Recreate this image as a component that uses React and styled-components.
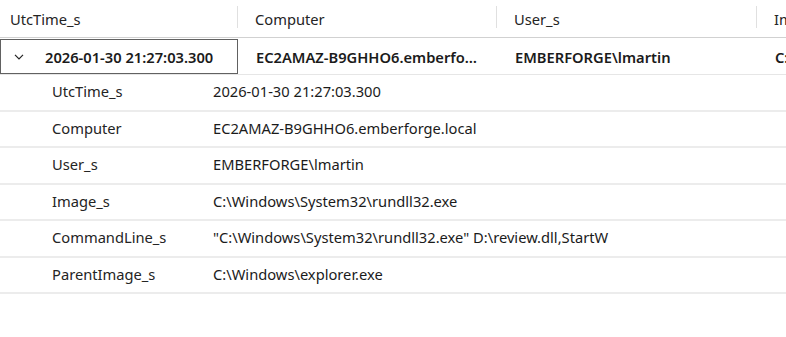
import React from 'react';
import styled, { createGlobalStyle } from 'styled-components';

const GlobalStyle = createGlobalStyle`
  html, body {
    margin: 0;
    padding: 0;
    background: #ffffff;
  }
  body {
    font-family: "Segoe UI", "Noto Sans", "Open Sans", sans-serif;
    color: #1b1b1b;
  }
`;

const columns = [
  { key: 'UtcTime_s', width: 238 },
  { key: 'Computer', width: 259 },
  { key: 'User_s', width: 260 },
  { key: 'Image_s', width: 260 },
];

const Grid = styled.div`
  width: 786px;
  height: 337px;
  overflow: hidden;
  font-size: 14.7px;
`;

const HeaderRow = styled.div`
  display: flex;
  height: 38px;
  border-bottom: 1px solid #d1d1d1;
  box-sizing: border-box;
`;

const HeaderCell = styled.div`
  flex: 0 0 ${(p) => p.$width}px;
  display: flex;
  align-items: center;
  padding-left: ${(p) => (p.$first ? 10 : 17)}px;
  box-sizing: border-box;
  position: relative;
  color: #242424;
  white-space: nowrap;

  &::after {
    content: '';
    position: absolute;
    right: 0;
    top: 6px;
    height: 22px;
    border-right: 1px solid #e0e0e0;
  }
`;

const DataRow = styled.div`
  display: flex;
  height: 36px;
  border-bottom: 1px solid #e6e6e6;
  box-sizing: content-box;
  font-weight: 600;
`;

const DataCell = styled.div`
  flex: 0 0 ${(p) => p.$width}px;
  display: flex;
  align-items: center;
  gap: 21px;
  padding: 0 15px 0 ${(p) => (p.$selected ? 10 : 17)}px;
  box-sizing: border-box;
  white-space: nowrap;
  overflow: hidden;
  border: ${(p) => (p.$selected ? '1px solid #616161' : '1px solid transparent')};
  margin-top: 1px;
`;

const CellText = styled.span`
  overflow: hidden;
  text-overflow: ellipsis;
`;

const Chevron = styled.svg`
  flex: 0 0 auto;
  margin-left: 3px;
`;

const Details = styled.div`
  display: flex;
  flex-direction: column;
`;

const DetailRow = styled.div`
  display: grid;
  grid-template-columns: 213px 1fr;
  height: 36.5px;
  box-sizing: border-box;
  border-bottom: 2px solid #ececec;
  align-items: center;
  padding-bottom: 2px;
`;

const DetailLabel = styled.div`
  padding-left: 52px;
  color: #242424;
`;

const DetailValue = styled.div`
  color: #1b1b1b;
  white-space: nowrap;
`;

const row = {
  UtcTime_s: '2026-01-30 21:27:03.300',
  Computer: 'EC2AMAZ-B9GHHO6.emberforge.local',
  User_s: 'EMBERFORGE\\lmartin',
  Image_s: 'C:\\Windows\\System32\\rundll32.exe',
};

const details = [
  ['UtcTime_s', row.UtcTime_s],
  ['Computer', row.Computer],
  ['User_s', row.User_s],
  ['Image_s', row.Image_s],
  ['CommandLine_s', '"C:\\Windows\\System32\\rundll32.exe" D:\\review.dll,StartW'],
  ['ParentImage_s', 'C:\\Windows\\explorer.exe'],
];

export default function App() {
  return (
    <Grid>
      <GlobalStyle />
      <HeaderRow>
        {columns.map((c, i) => (
          <HeaderCell key={c.key} $width={c.width} $first={i === 0}>
            {c.key}
          </HeaderCell>
        ))}
      </HeaderRow>
      <DataRow>
        {columns.map((c, i) => (
          <DataCell key={c.key} $width={c.width} $selected={i === 0}>
            {i === 0 && (
              <Chevron width="10" height="6" viewBox="0 0 10 6">
                <path d="M1 0.8 L5 4.8 L9 0.8" fill="none" stroke="#242424" strokeWidth="1.2" />
              </Chevron>
            )}
            <CellText>{row[c.key]}</CellText>
          </DataCell>
        ))}
      </DataRow>
      <Details>
        {details.map(([label, value]) => (
          <DetailRow key={label}>
            <DetailLabel>{label}</DetailLabel>
            <DetailValue>{value}</DetailValue>
          </DetailRow>
        ))}
      </Details>
    </Grid>
  );
}
